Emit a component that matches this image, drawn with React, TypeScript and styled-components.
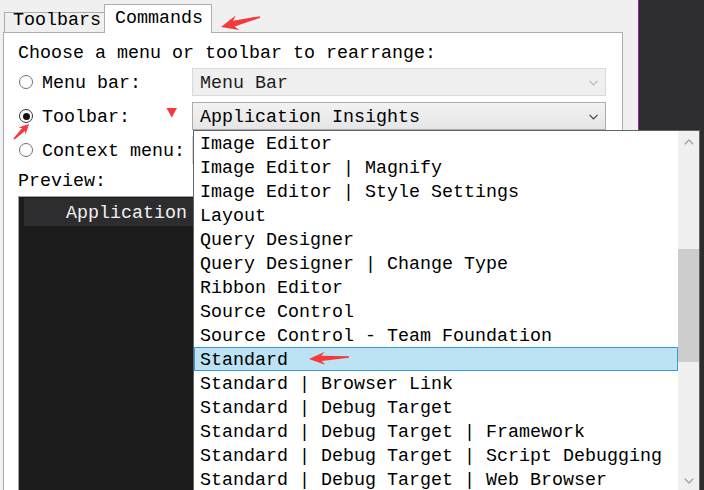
import React from "react";
import styled, { createGlobalStyle } from "styled-components";

const GlobalStyle = createGlobalStyle`
  html, body {
    margin: 0;
    padding: 0;
    width: 704px;
    height: 490px;
    overflow: hidden;
  }
  body {
    font-family: "Liberation Mono", "Courier New", monospace;
    font-size: 18.33px;
    color: #000;
  }
  * { box-sizing: border-box; }
`;

const Screen = styled.div`
  position: relative;
  display: flex;
  width: 704px;
  height: 490px;
  overflow: hidden;
`;

const Dialog = styled.div`
  width: 639px;
  height: 490px;
  flex: none;
  display: flex;
  flex-direction: column;
  padding: 4px 0 0 3px;
  background: #f0f0f0;
  border-right: 1px solid #a41ca8;
`;

const Backdrop = styled.div`
  flex: 1;
  background: #2d2d30;
`;

const TabStrip = styled.div`
  display: flex;
  align-items: flex-start;
  height: 29px;
  margin-bottom: -1px;
  padding-left: 1px;
  position: relative;
  z-index: 1;
`;

const Tab = styled.div<{ $active?: boolean }>`
  border: 1px solid #adadad;
  white-space: nowrap;
  padding-top: 1px;
  ${(p) =>
    p.$active
      ? `
    width: 108px;
    height: 29px;
    border-bottom: none;
    background: #fff;
    padding-left: 10px;
    line-height: 26px;
  `
      : `
    width: 100px;
    height: 21px;
    margin-top: 8px;
    border-right: none;
    background: #f0f0f0;
    padding-left: 8px;
    line-height: 14px;
  `}
`;

const Panel = styled.div`
  width: 620px;
  height: 470px;
  flex: none;
  background: #fff;
  border: 1px solid #adadad;
  padding: 9px 15px 0 14px;
`;

const Heading = styled.div`
  line-height: 24px;
  height: 24px;
  margin-bottom: 2px;
  white-space: nowrap;
`;

const ChoiceGrid = styled.div`
  display: grid;
  grid-template-columns: 174px 414px;
  grid-auto-rows: 28px;
  row-gap: 6px;
`;

const RadioLabel = styled.div`
  display: flex;
  align-items: center;
  gap: 9px;
  padding-left: 1px;
  white-space: nowrap;
`;

const LabelText = styled.span`
  line-height: 24px;
  margin-top: 4px;
`;

const RadioDot = styled.span<{ $checked?: boolean }>`
  width: 14px;
  height: 14px;
  flex: none;
  border-radius: 50%;
  border: 1px solid ${(p) => (p.$checked ? "#333" : "#707070")};
  background: #fff;
  display: flex;
  align-items: center;
  justify-content: center;

  &::after {
    content: "";
    display: ${(p) => (p.$checked ? "block" : "none")};
    width: 7px;
    height: 7px;
    border-radius: 50%;
    background: #111;
  }
`;

const ComboCell = styled.div`
  position: relative;
`;

const Combo = styled.div<{ $disabled?: boolean }>`
  height: 28px;
  display: flex;
  align-items: center;
  justify-content: space-between;
  padding: 4px 7px 0 7px;
  line-height: 26px;
  white-space: nowrap;
  border: 1px solid ${(p) => (p.$disabled ? "#d9d9d9" : "#acacac")};
  background: ${(p) =>
    p.$disabled ? "#efefef" : "linear-gradient(#f2f2f2, #e6e6e6)"};
  color: ${(p) => (p.$disabled ? "#1e1e1e" : "#000")};
`;

const ChevronIcon = styled.svg`
  flex: none;
  margin-top: -3px;
`;

const Chevron = ({ color }: { color: string }) => (
  <ChevronIcon width="9" height="6" viewBox="0 0 9 6">
    <path d="M0.5 0.8 L4.5 4.8 L8.5 0.8" fill="none" stroke={color} strokeWidth="1.2" />
  </ChevronIcon>
);

const DropList = styled.div`
  position: absolute;
  top: 28px;
  left: 1px;
  width: 507px;
  height: 362px;
  z-index: 10;
  display: flex;
  background: #fff;
  border: 1px solid #646464;
`;

const Items = styled.div`
  width: 484px;
  display: flex;
  flex-direction: column;
`;

const Item = styled.div<{ $selected?: boolean }>`
  height: 24px;
  flex: none;
  white-space: nowrap;
  ${(p) =>
    p.$selected
      ? `
    background: #bce2f4;
    border: 1px solid #3a9ad6;
    line-height: 22px;
    padding: 2px 0 0 5px;
  `
      : `
    line-height: 24px;
    padding: 2px 0 0 6px;
  `}
`;

const ScrollBar = styled.div`
  width: 21px;
  display: flex;
  flex-direction: column;
  background: #f0f0f0;
`;

const ScrollButton = styled.div`
  height: 21px;
  flex: none;
  display: flex;
  align-items: center;
  justify-content: center;
`;

const Track = styled.div`
  flex: 1;
`;

const Thumb = styled.div<{ $top: number; $size: number }>`
  margin-top: ${(p) => p.$top}px;
  height: ${(p) => p.$size}px;
  background: #cdcdcd;
`;

const PreviewLabel = styled.div`
  line-height: 24px;
  height: 24px;
  margin-top: 4px;
  padding-top: 2px;
`;

const PreviewBox = styled.div`
  margin-top: 4px;
  width: 588px;
  height: 300px;
  border: 1px solid #a0a0a0;
  background: #1b1b1b;
  padding: 1px 0 0 5px;
`;

const PreviewStrip = styled.div`
  height: 28px;
  line-height: 28px;
  padding: 2px 0 0 42px;
  background: #2d2d30;
  color: #f1f1f1;
  white-space: nowrap;
`;

const Overlay = styled.svg`
  position: absolute;
  left: 0;
  top: 0;
  pointer-events: none;
  z-index: 20;
`;

type Pt = [number, number];

// annotation arrow: wide head at the tip, shaft tapering to the tail
function arrowPoints(tip: Pt, tail: Pt, head: number, half: number, shaft: number): string {
  const dx = tail[0] - tip[0];
  const dy = tail[1] - tip[1];
  const len = Math.hypot(dx, dy);
  const u: Pt = [dx / len, dy / len];
  const n: Pt = [-u[1], u[0]];
  const at = (along: number, side: number): Pt => [
    tip[0] + u[0] * along + n[0] * side,
    tip[1] + u[1] * along + n[1] * side,
  ];
  const pts: Pt[] = [
    tip,
    at(head, half),
    at(head * 0.78, shaft),
    at(len, 0.8),
    at(len, -0.8),
    at(head * 0.78, -shaft),
    at(head, -half),
  ];
  return pts.map((p) => `${p[0].toFixed(1)},${p[1].toFixed(1)}`).join(" ");
}

const RED = "#f43a3a";

const listItems = [
  "Image Editor",
  "Image Editor | Magnify",
  "Image Editor | Style Settings",
  "Layout",
  "Query Designer",
  "Query Designer | Change Type",
  "Ribbon Editor",
  "Source Control",
  "Source Control - Team Foundation",
  "Standard",
  "Standard | Browser Link",
  "Standard | Debug Target",
  "Standard | Debug Target | Framework",
  "Standard | Debug Target | Script Debugging",
  "Standard | Debug Target | Web Browser",
];

export default function App() {
  return (
    <>
      <GlobalStyle />
      <Screen>
        <Dialog>
          <TabStrip>
            <Tab>Toolbars</Tab>
            <Tab $active>Commands</Tab>
          </TabStrip>
          <Panel>
            <Heading>Choose a menu or toolbar to rearrange:</Heading>
            <ChoiceGrid>
              <RadioLabel>
                <RadioDot />
                <LabelText>Menu bar:</LabelText>
              </RadioLabel>
              <ComboCell>
                <Combo $disabled>
                  Menu Bar
                  <Chevron color="#b4b4b4" />
                </Combo>
              </ComboCell>

              <RadioLabel>
                <RadioDot $checked />
                <LabelText>Toolbar:</LabelText>
              </RadioLabel>
              <ComboCell>
                <Combo>
                  Application Insights
                  <Chevron color="#404040" />
                </Combo>
                <DropList>
                  <Items>
                    {listItems.map((t) => (
                      <Item key={t} $selected={t === "Standard"}>
                        {t}
                      </Item>
                    ))}
                  </Items>
                  <ScrollBar>
                    <ScrollButton>
                      <svg width="10" height="6" viewBox="0 0 10 6">
                        <path d="M0.8 5.2 L5 1 L9.2 5.2" fill="none" stroke="#a3a3a3" strokeWidth="1.4" />
                      </svg>
                    </ScrollButton>
                    <Track>
                      <Thumb $top={97} $size={113} />
                    </Track>
                    <ScrollButton>
                      <svg width="10" height="6" viewBox="0 0 10 6">
                        <path d="M0.8 0.8 L5 5 L9.2 0.8" fill="none" stroke="#a3a3a3" strokeWidth="1.4" />
                      </svg>
                    </ScrollButton>
                  </ScrollBar>
                </DropList>
              </ComboCell>

              <RadioLabel>
                <RadioDot />
                <LabelText>Context menu:</LabelText>
              </RadioLabel>
              <ComboCell>
                <Combo $disabled />
              </ComboCell>
            </ChoiceGrid>
            <PreviewLabel>Preview:</PreviewLabel>
            <PreviewBox>
              <PreviewStrip>Application</PreviewStrip>
            </PreviewBox>
          </Panel>
        </Dialog>
        <Backdrop />
        <Overlay width="704" height="490" viewBox="0 0 704 490">
          <polygon points={arrowPoints([221, 27], [260, 17], 17, 7.5, 3)} fill={RED} />
          <polygon points="166.5,108 177,108 171.8,117.5" fill={RED} />
          <polygon points={arrowPoints([29, 124], [14, 139], 10, 5, 2)} fill={RED} />
          <polygon points={arrowPoints([309, 359], [349, 357], 16, 6.5, 2.6)} fill={RED} />
        </Overlay>
      </Screen>
    </>
  );
}
